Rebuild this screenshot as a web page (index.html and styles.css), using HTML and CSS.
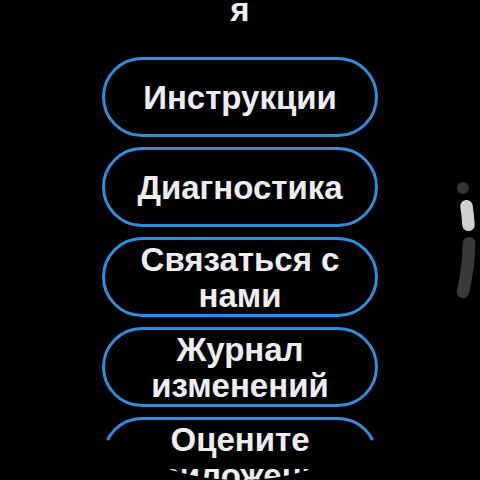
FILE: index.html
```html
<!DOCTYPE html>
<html lang="ru">
<head>
<meta charset="utf-8">
<link rel="stylesheet" href="styles.css">
</head>
<body>
<div class="screen">
  <div class="title">я</div>
  <div class="list">
    <div class="chip"><span>Инструкции</span></div>
    <div class="chip"><span>Диагностика</span></div>
    <div class="chip"><span>Связаться с<br>нами</span></div>
    <div class="chip"><span>Журнал<br>изменений</span></div>
    <div class="chip"><span>Оцените<br>приложение</span></div>
  </div>
  <svg class="scrollbar" width="480" height="480" viewBox="0 0 480 480">
    <circle cx="463" cy="188" r="6" fill="#353535"/>
    <path d="M466.5 206.2 A229 229 0 0 1 468.5 224.8" stroke="#cfcfcf" stroke-width="12.5" stroke-linecap="round" fill="none"/>
    <path d="M469 243.2 A229 229 0 0 1 463 291.9" stroke="#3a3a3a" stroke-width="12.5" stroke-linecap="round" fill="none"/>
  </svg>
</div>
</body>
</html>
```

FILE: styles.css
```css
html, body {
  margin: 0;
  padding: 0;
  background: #000;
}

.screen {
  position: relative;
  width: 480px;
  height: 480px;
  border-radius: 50%;
  overflow: hidden;
  background: #000;
  display: flex;
  flex-direction: column;
  align-items: center;
  font-family: "Liberation Sans", Arial, sans-serif;
  color: #efedf3;
}

.title {
  margin-top: -8px;
  font-size: 33px;
  font-weight: 700;
  line-height: 36px;
  text-align: center;
}

.list {
  margin-top: 29px;
  display: flex;
  flex-direction: column;
  gap: 10px;
}

.chip {
  box-sizing: border-box;
  width: 276px;
  height: 80px;
  border: 3px solid #2f8fdc;
  border-radius: 40px;
  display: flex;
  align-items: center;
  justify-content: center;
  text-align: center;
  font-size: 33px;
  font-weight: 700;
  line-height: 36px;
  padding-top: 2px;
  flex-shrink: 0;
}

.scrollbar {
  position: absolute;
  left: 0;
  top: 0;
}
```
